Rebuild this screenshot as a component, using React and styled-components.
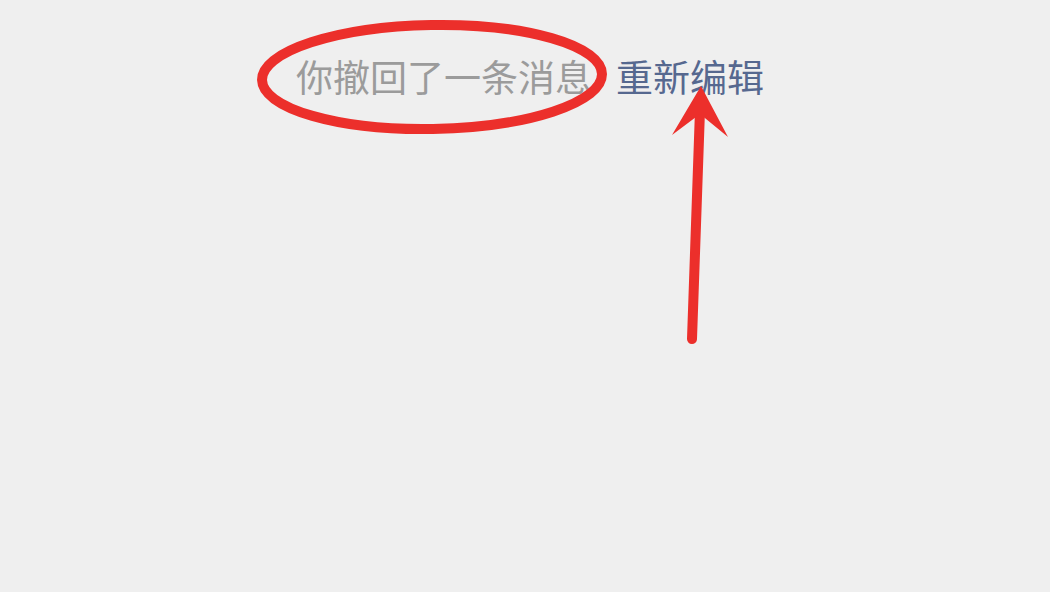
import React from 'react';
import styled, { createGlobalStyle } from 'styled-components';

const GlobalStyle = createGlobalStyle`
    html, body {
        margin: 0;
        padding: 0;
        background: #efefef;
    }
`;

const Screen = styled.div`
    position: relative;
    width: 1050px;
    height: 592px;
    overflow: hidden;
    background: #efefef;
    font-family: "Noto Sans CJK SC", "Noto Sans", sans-serif;
`;

const NoticeRow = styled.div`
    display: flex;
    align-items: center;
    padding: 54px 0 0 296px;
    font-size: 37px;
    line-height: 44px;
    white-space: nowrap;
`;

const NoticeText = styled.span`
    color: #9b9b9b;
`;

const EditLink = styled.span`
    color: #56688f;
    margin-left: 24px;
    cursor: pointer;
`;

const Annotation = styled.svg`
    position: absolute;
    left: 0;
    top: 0;
    pointer-events: none;
`;

export default function App() {
    return (
        <Screen>
            <GlobalStyle />
            <NoticeRow>
                <NoticeText>你撤回了一条消息</NoticeText>
                <EditLink>重新编辑</EditLink>
            </NoticeRow>
            <Annotation width="1050" height="592" viewBox="0 0 1050 592">
                <ellipse cx="432" cy="77" rx="170" ry="52" fill="none" stroke="#ec2f2b" strokeWidth="10" transform="rotate(-1 432 77)" />
                <line x1="692" y1="339" x2="700" y2="110" stroke="#ec2f2b" strokeWidth="10" strokeLinecap="round" />
                <polygon points="701,86 672,135 700,114 728,137" fill="#ec2f2b" />
            </Annotation>
        </Screen>
    );
}
